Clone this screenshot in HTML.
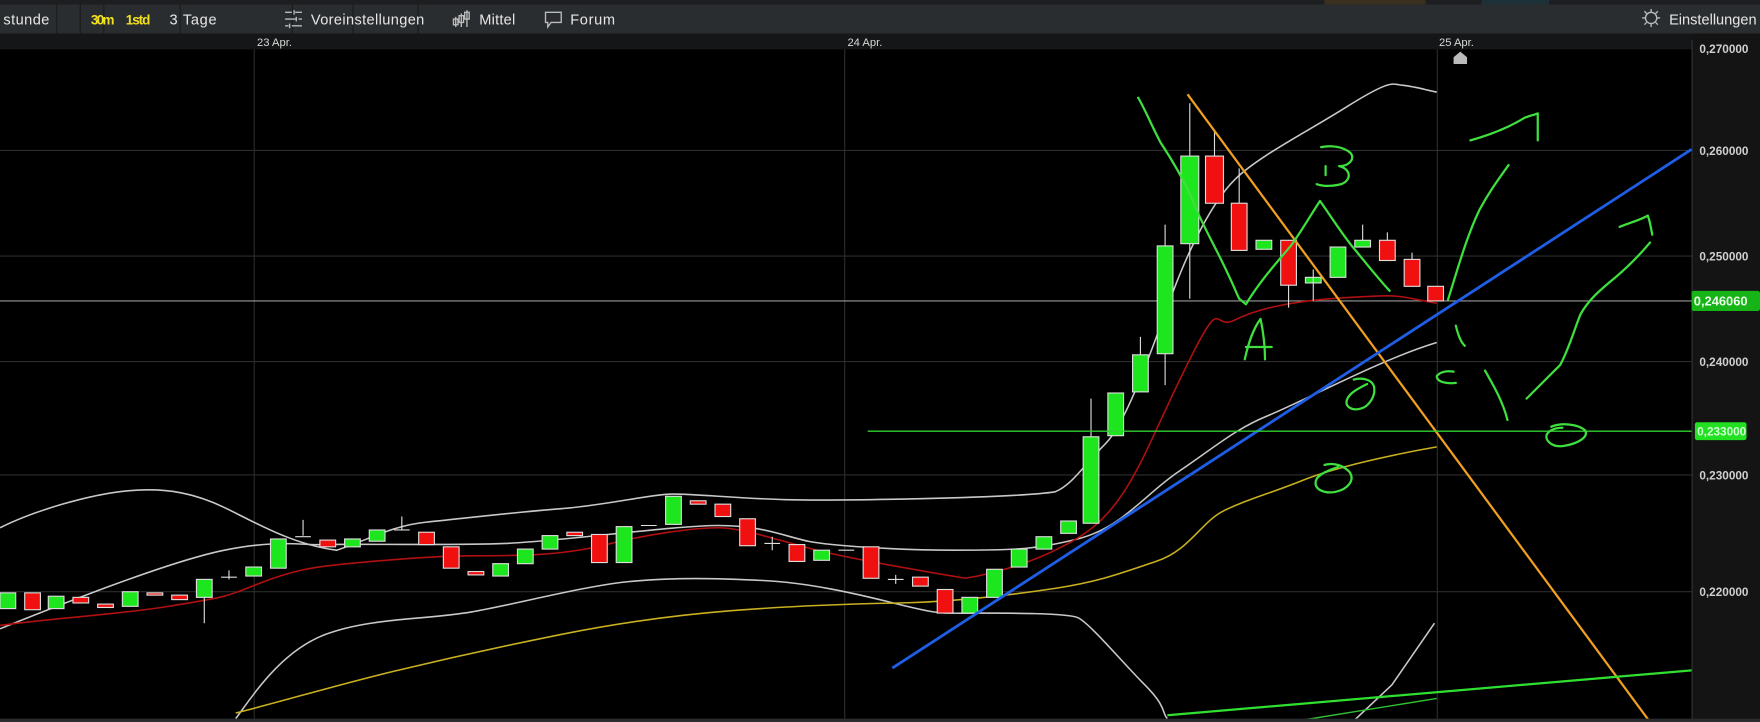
<!DOCTYPE html>
<html><head><meta charset="utf-8"><style>
html,body{margin:0;padding:0;background:#000;width:1760px;height:722px;overflow:hidden}
svg{display:block}
text{font-family:"Liberation Sans",sans-serif}
</style></head><body>
<svg width="1760" height="722" viewBox="0 0 1568 643" preserveAspectRatio="none" xmlns="http://www.w3.org/2000/svg">
<rect x="0" y="0" width="1568" height="643" fill="#000"/>
<rect x="0" y="0" width="1568" height="4" fill="#1c1e20"/>
<rect x="1180" y="0" width="90" height="4" fill="#3a3020"/>
<rect x="1320" y="0" width="60" height="4" fill="#1e3038"/>
<rect x="0" y="4" width="1568" height="26" fill="#2a2d30"/>
<g stroke="#1a1b1d" stroke-width="1">
<line x1="50.5" y1="4" x2="50.5" y2="30"/><line x1="71.5" y1="4" x2="71.5" y2="30"/><line x1="92.5" y1="4" x2="92.5" y2="30"/><line x1="160.5" y1="4" x2="160.5" y2="30"/><line x1="260.5" y1="4" x2="260.5" y2="30"/><line x1="314.5" y1="4" x2="314.5" y2="30"/><line x1="372.5" y1="4" x2="372.5" y2="30"/>
</g>
<g font-size="13" fill="#e6e6e6">
<text x="3" y="22" textLength="41">stunde</text>
<text x="81" y="22" fill="#f0e020" font-weight="bold" font-size="12" textLength="21">30m</text>
<text x="112" y="22" fill="#f0e020" font-weight="bold" font-size="12" textLength="22">1std</text>
<text x="151" y="22" textLength="42">3 Tage</text>
<text x="277" y="22" textLength="101">Voreinstellungen</text>
<text x="427" y="22" textLength="32">Mittel</text>
<text x="508" y="22" textLength="40">Forum</text>
<text x="1487" y="22">Einstellungen</text>
</g>
<g stroke="#bbb" stroke-width="1.2" fill="none">
<path d="M254 11h6M263 11h6M254 17h10M266 17h3M254 23h3M260 23h9M262 9v4M264 15v4M258 21v4"/>
<path d="M406 15v9M411 12v12M416 9v15M404 17h4v5h-4zM409 14h4v6h-4zM414 11h4v6h-4z"/>
<path d="M486 11h14v9h-9l-3 4v-4h-2z"/>
<circle cx="1471" cy="16" r="5"/>
<path d="M1463 16h3M1476 16h3M1471 8v3M1471 21v3M1465 10l2 2M1475 20l2 2M1465 22l2-2M1475 12l2-2"/>
</g>
<rect x="0" y="30" width="1568" height="14" fill="#151617"/>
<g font-size="10" fill="#d8d8d8"><text x="229" y="41">23 Apr.</text><text x="755" y="41">24 Apr.</text><text x="1282" y="41">25 Apr.</text></g>
<path d="M1295 57v-6l6-5 6 5v6z" fill="#bbb"/>
<rect x="1507" y="30" width="61" height="613" fill="#141414"/>
<line x1="1507.5" y1="36" x2="1507.5" y2="643" stroke="#333"/>
<g font-size="10.5" fill="#cfcfcf" font-weight="bold">
<text x="1514" y="47">0,270000</text>
<text x="1514" y="138">0,260000</text>
<text x="1514" y="232">0,250000</text>
<text x="1514" y="326">0,240000</text>
<text x="1514" y="427">0,230000</text>
<text x="1514" y="531">0,220000</text>
</g>
<rect x="1507" y="259" width="61" height="18" rx="2" fill="#17b417"/>
<text x="1509" y="272" font-size="11.5" font-weight="bold" fill="#eaffea">0,246060</text>
<rect x="1510" y="376" width="46" height="16" rx="2" fill="#22e022"/>
<text x="1512" y="388" font-size="10.5" fill="#d0ffd0" font-weight="bold">0,233000</text>
<g stroke="#2c2c2c" stroke-width="1">
<line x1="0" y1="134" x2="1507" y2="134"/><line x1="0" y1="228" x2="1507" y2="228"/><line x1="0" y1="322" x2="1507" y2="322"/><line x1="0" y1="423" x2="1507" y2="423"/><line x1="0" y1="527" x2="1507" y2="527"/>
<line x1="226.5" y1="44" x2="226.5" y2="643"/><line x1="752.5" y1="44" x2="752.5" y2="643"/><line x1="1280.5" y1="44" x2="1280.5" y2="643"/>
</g>
<line x1="0" y1="268" x2="1507" y2="268" stroke="#999" stroke-width="1"/>
<g fill="none" stroke-width="1.4" stroke-linejoin="round">
<path stroke="#c8c8c8" d="M0 470C30 455 80 440 115 437S175 440 200 452S260 485 300 490C330 480 350 468 380 465S460 456 500 453S580 440 600 440S660 444 700 445S900 444 940 438C955 432 965 415 985 395S1030 300 1045 260S1080 180 1100 160S1160 120 1200 95S1240 75 1250 76S1270 80 1280 82"/>
<path stroke="#c8c8c8" d="M0 560C50 540 150 500 200 490S270 486 290 485S400 486 450 484S600 468 640 468S700 478 720 482S800 490 850 490S920 490 960 480S1020 440 1050 420S1100 382 1130 370S1230 320 1280 305"/>
<path stroke="#c8c8c8" d="M210 640C225 620 250 580 290 565S380 552 420 545S520 522 560 518S640 515 680 517S760 528 800 538S840 546 870 546S950 546 960 550S1000 590 1020 610S1035 635 1040 640"/>
<polyline stroke="#c8c8c8" points="1205,643 1240,610 1278,555"/>
<path stroke="#b01010" d="M0 557C50 550 100 548 150 540S200 532 230 520S280 505 300 503S380 495 420 495S500 495 540 485S620 470 640 470S690 480 720 488S800 505 860 515C890 510 920 500 940 490S980 470 1000 440S1030 380 1060 320S1080 295 1100 285S1150 268 1200 265S1240 263 1280 270"/>
<path stroke="#c8b020" d="M210 635C250 625 300 610 350 598S450 575 500 565S600 548 650 544S750 538 800 537S900 530 940 524S1000 510 1030 500S1070 465 1090 455S1130 440 1160 428S1240 405 1280 398"/>
</g>
<g stroke="#ddd" stroke-width="1">
<g fill="#1ee61e">
<rect x="0" y="528" width="14" height="14"/><rect x="43" y="531" width="14" height="11"/><rect x="109" y="527" width="14" height="13"/><rect x="175" y="516" width="14" height="16"/><rect x="219" y="505" width="14" height="8"/><rect x="241" y="480" width="14" height="26"/><rect x="307" y="480" width="14" height="7"/><rect x="329" y="472" width="14" height="10"/><rect x="439" y="502" width="14" height="11"/><rect x="461" y="489" width="14" height="13"/><rect x="483" y="477" width="14" height="12"/><rect x="549" y="469" width="14" height="32"/><rect x="593" y="442" width="14" height="25"/><rect x="725" y="490" width="14" height="9"/><rect x="857" y="532" width="14" height="14"/><rect x="879" y="507" width="14" height="25"/><rect x="901" y="489" width="14" height="16"/><rect x="923" y="478" width="14" height="11"/><rect x="945" y="464" width="14" height="11"/><rect x="965" y="389" width="14" height="77"/><rect x="987" y="350" width="14" height="38"/><rect x="1009" y="316" width="14" height="33"/><rect x="1031" y="219" width="14" height="96"/><rect x="1052" y="139" width="16" height="78"/><rect x="1119" y="214" width="14" height="8"/><rect x="1163" y="247" width="14" height="5"/><rect x="1185" y="220" width="14" height="27"/><rect x="1207" y="214" width="14" height="6"/>
</g>
<g fill="#f01010">
<rect x="22" y="528" width="14" height="15"/><rect x="65" y="532" width="14" height="5"/><rect x="87" y="538" width="14" height="3"/><rect x="131" y="528" width="14" height="2"/><rect x="153" y="530" width="14" height="4"/><rect x="285" y="481" width="14" height="6"/><rect x="373" y="474" width="14" height="11"/><rect x="395" y="487" width="14" height="19"/><rect x="417" y="509" width="14" height="3"/><rect x="505" y="474" width="14" height="3"/><rect x="527" y="476" width="14" height="25"/><rect x="615" y="446" width="14" height="3"/><rect x="637" y="449" width="14" height="11"/><rect x="659" y="462" width="14" height="24"/><rect x="703" y="485" width="14" height="15"/><rect x="769" y="487" width="14" height="28"/><rect x="813" y="514" width="14" height="8"/><rect x="835" y="525" width="14" height="21"/><rect x="1074" y="139" width="16" height="42"/><rect x="1097" y="181" width="14" height="42"/><rect x="1141" y="214" width="14" height="40"/><rect x="1229" y="214" width="14" height="18"/><rect x="1251" y="231" width="14" height="24"/><rect x="1272" y="255" width="14" height="13"/>
</g>
<path d="M182 532v23M1060 92v47M1060 217v49M1082 117v22M1038 200v19M1038 315v28M1016 300v16M972 355v34M1104 150v31M1148 254v20M1170 240v28M1214 200v14M1236 207v7M1258 225v6M270 463v14M204 508v8M358 460v12M688 478v12M798 512v8M263 478h14M197 514h14M351 472h14M681 484h14M791 516h14M747 490h14M571 468h14" fill="none"/>
</g>
<line x1="1058" y1="84" x2="1470" y2="643" stroke="#f0a020" stroke-width="2"/>
<line x1="795" y1="595" x2="1507" y2="133" stroke="#1e5ee6" stroke-width="2.5"/>
<line x1="773" y1="384" x2="1507" y2="384" stroke="#30d030" stroke-width="1.3"/>
<line x1="1040" y1="637" x2="1507" y2="597" stroke="#30e030" stroke-width="2"/>
<line x1="1150" y1="643" x2="1280" y2="622" stroke="#30c030" stroke-width="1.3"/>
<g fill="none" stroke="#3ee03e" stroke-width="2" stroke-linecap="round" stroke-linejoin="round">
<path d="M1014 87c6 10 12 25 20 40c8 12 22 35 30 55c8 20 20 40 30 62c4 8 8 18 10 22l6 5c12-20 28-38 40-52c10-14 18-28 26-40c10 14 20 30 30 42c10 12 20 25 32 38"/>
<path d="M1177 131c10-2 20 0 26 5c5 6-2 12-10 12c10 2 12 12 2 16c-8 2-16 2-22 0M1181 148v8"/>
<path d="M1109 320c3-14 8-28 14-36c3 14 4 26 4 36M1110 309h23"/>
<path d="M1290 267c8-25 16-55 28-80c8-15 16-26 26-40M1310 125c18-5 35-12 48-20c5-2 10-3 12-4v24"/>
<path d="M1297 290c2 8 4 14 8 18"/>
<path d="M1360 355c10-10 20-20 30-30c8-15 12-30 18-45c8-14 18-22 30-32c12-10 22-20 32-32M1443 202c10-4 18-6 25-10c2 5 3 12 4 17"/>
<path d="M1323 330c8 14 16 28 20 44"/>
<path d="M1295 331c-6-1-12 0-15 4c0 5 8 7 17 6"/>
<path d="M1382 380c10-4 24-2 30 3c4 6-6 12-18 14c-10 2-18-4-16-10c2-4 8-6 14-6"/>
<path d="M1206 338c8-2 16 0 18 6c2 8-4 18-12 20c-8 2-14-2-12-8c2-6 10-10 18-14"/>
<path d="M1180 414c8-2 16 0 22 6c6 8-2 16-12 18c-10 2-18-2-18-8c0-6 8-10 20-14"/>
</g>
<rect x="0" y="640" width="1568" height="3" fill="#2a2d30"/>
</svg>
</body></html>
